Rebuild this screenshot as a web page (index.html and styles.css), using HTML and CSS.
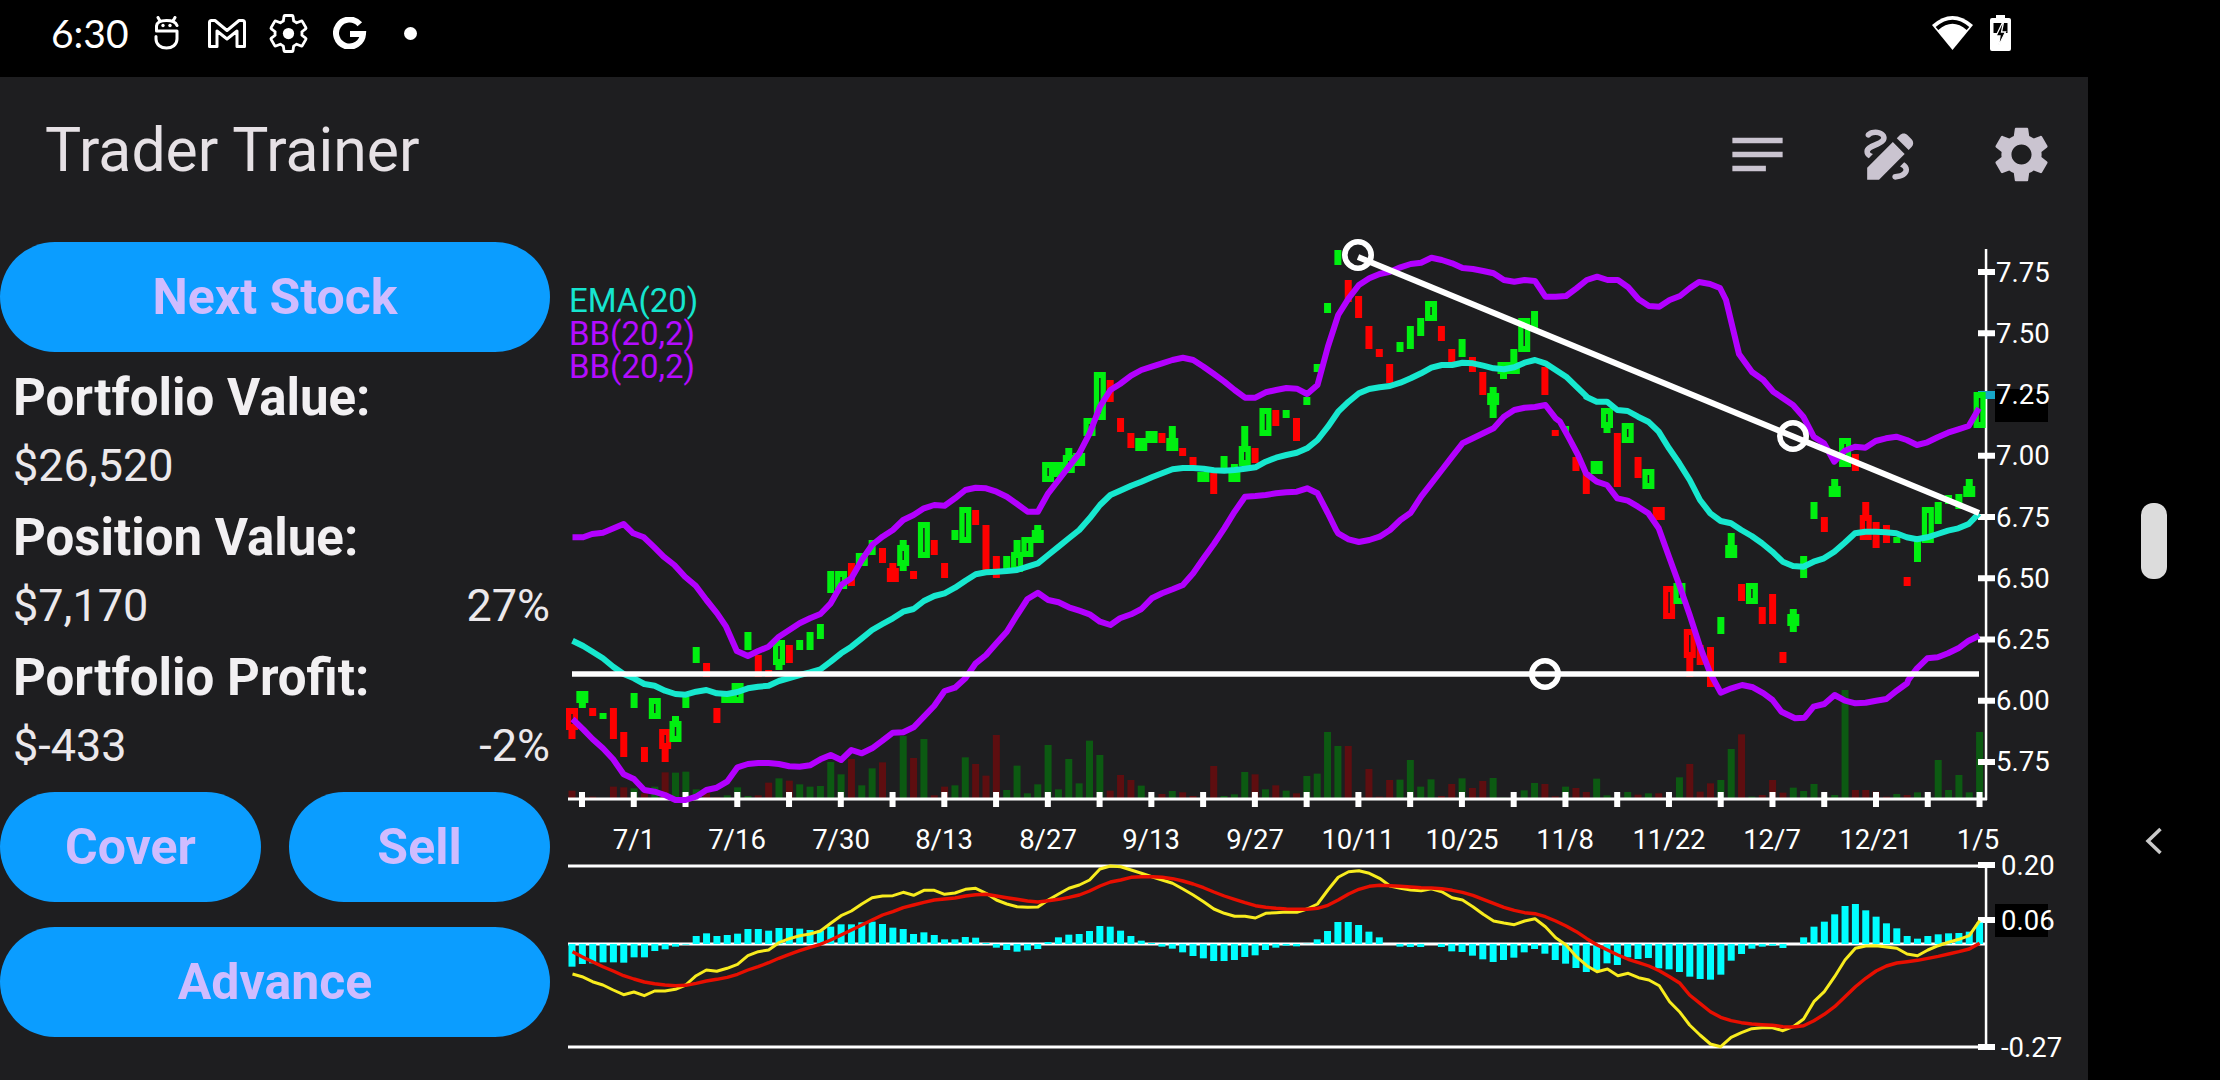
FILE: index.html
```html
<!DOCTYPE html>
<html lang="en">
<head>
<meta charset="utf-8">
<title>Trader Trainer</title>
<link rel="stylesheet" href="styles.css">
</head>
<body>
<header class="status-bar">
  <div class="status-left">
    <span class="clock">6:30</span>
    <svg class="si si-bot" viewBox="0 0 25 34"><path class="si-line" d="M23 9.500C21.500 5.500 17 4.500 12.500 4.500S3 5.500 2.500 10V15H23V23C23 29 18 32 12.500 32S2 29 2 23V20.500M4 1.500L6 5M21 1.500L19 5"/><circle class="si-fill" cx="9" cy="9.500" r="1.700"/><circle class="si-fill" cx="16" cy="9.500" r="1.700"/></svg>
    <svg class="si si-mail" viewBox="0 0 38 29"><path class="si-line" d="M3.500 1.500H7L19 11.500L31 1.500H34.500Q36.500 1.500 36.500 3.500V27.500H29V12L19 20L9 12V27.500H1.500V3.500Q1.500 1.500 3.500 1.500Z"/></svg>
    <svg class="si si-gear" viewBox="0 0 24 24"><path class="si-line-thin" d="M19.140 12.940c.04-.3.06-.61.06-.94 0-.32-.02-.64-.07-.94l2.030-1.580c.18-.14.23-.41.12-.61l-1.920-3.320c-.12-.22-.37-.29-.59-.22l-2.390.96c-.5-.38-1.030-.7-1.620-.94l-.36-2.540c-.04-.24-.24-.41-.48-.41h-3.840c-.24 0-.43.17-.47.41l-.36 2.540c-.59.24-1.130.57-1.620.94l-2.390-.96c-.22-.08-.47 0-.59.22L2.740 8.870c-.12.21-.08.47.12.61l2.030 1.580c-.05.3-.09.63-.09.94s.02.64.07.94l-2.030 1.580c-.18.14-.23.41-.12.61l1.920 3.320c.12.22.37.29.59.22l2.390-.96c.5.38 1.030.7 1.620.94l.36 2.540c.05.24.24.41.48.41h3.840c.24 0 .44-.17.47-.41l.36-2.540c.59-.24 1.130-.56 1.620-.94l2.390.96c.22.08.47 0 .59-.22l1.920-3.320c.12-.22.07-.47-.12-.61l-2.010-1.580z"/><circle class="si-fill" cx="12" cy="12" r="3"/></svg>
    <svg class="si si-g" viewBox="0 0 34 32"><path class="si-g-line" d="M26.800 7.300A13.500 13.500 0 1 0 30 17H17"/></svg>
    <span class="status-dot"></span>
  </div>
  <div class="status-right">
    <svg class="si si-wifi" viewBox="0 0 41 34"><path class="si-fill" d="M0 9Q20.500 -9 41 9L20.500 34Z"/><path class="si-gap" d="M5 12.500Q20.500 -1 36 12.500"/></svg>
    <svg class="si si-batt" viewBox="0 0 21 36"><path class="si-fill" d="M6 0H15V3H19Q21 3 21 5V34Q21 36 19 36H2Q0 36 0 34V5Q0 3 2 3H6Z"/><path class="si-cut" d="M3.500 8H17.500V18H3.500Z"/><path class="si-bolt" d="M12.500 7.500L6 21H10L8.500 31L15.500 17H11.500L13.500 7.500Z"/></svg>
  </div>
</header>
<div class="screen">
  <main class="app">
    <div class="toolbar">
      <h1 class="title">Trader Trainer</h1>
      <div class="actions">
        <svg class="action" viewBox="0 0 24 24"><path d="M3 18h12v-2H3v2zM3 6v2h18V6H3zm0 7h18v-2H3v2z"/></svg>
        <svg class="action" viewBox="0 0 24 24"><path d="M18.850 10.390l1.060-1.060c.78-.78.78-2.050 0-2.830L18.500 5.090c-.78-.78-2.050-.78-2.830 0l-1.060 1.060 4.240 4.240zm-5.660-2.830L4 16.760V21h4.240l9.190-9.190-4.240-4.250zM19 17.500c0 2.190-2.540 3.500-5 3.500-.55 0-1-.45-1-1s.45-1 1-1c1.540 0 3-.73 3-1.500 0-.47-.48-.87-1.230-1.200l1.480-1.480c1.070.63 1.750 1.470 1.750 2.680zM4.580 13.350C3.610 12.790 3 12.060 3 11c0-1.800 1.890-2.630 3.560-3.360C7.590 7.180 9 6.560 9 6c0-.41-.78-1-2-1-1.260 0-1.800.61-1.830.64-.35.41-.98.46-1.400.12-.41-.34-.49-.95-.15-1.380C3.730 4.240 4.760 3 7 3s4 1.320 4 3c0 1.870-1.930 2.720-3.640 3.470C6.420 9.880 5 10.500 5 11c0 .31.43.6 1.070.86l-1.490 1.490z"/></svg>
        <svg class="action" viewBox="0 0 24 24"><path d="M19.140 12.940c.04-.3.06-.61.06-.94 0-.32-.02-.64-.07-.94l2.030-1.580c.18-.14.23-.41.12-.61l-1.920-3.320c-.12-.22-.37-.29-.59-.22l-2.390.96c-.5-.38-1.030-.7-1.620-.94l-.36-2.540c-.04-.24-.24-.41-.48-.41h-3.840c-.24 0-.43.17-.47.41l-.36 2.540c-.59.24-1.130.57-1.620.94l-2.390-.96c-.22-.08-.47 0-.59.22L2.740 8.870c-.12.21-.08.47.12.61l2.030 1.580c-.05.3-.09.63-.09.94s.02.64.07.94l-2.030 1.580c-.18.14-.23.41-.12.61l1.920 3.320c.12.22.37.29.59.22l2.390-.96c.5.38 1.030.7 1.620.94l.36 2.540c.05.24.24.41.48.41h3.840c.24 0 .44-.17.47-.41l.36-2.540c.59-.24 1.130-.56 1.620-.94l2.390.96c.22.08.47 0 .59-.22l1.920-3.320c.12-.22.07-.47-.12-.61l-2.010-1.580zM12 15.600c-1.980 0-3.600-1.620-3.600-3.600s1.620-3.600 3.600-3.600 3.600 1.620 3.600 3.600-1.620 3.600-3.600 3.600z"/></svg>
      </div>
    </div>
    <div class="content">
      <aside class="panel">
        <button class="pill">Next Stock</button>
        <div class="stats">
          <div class="stat">
            <div class="stat-label">Portfolio Value:</div>
            <div class="stat-value"><span>$26,520</span></div>
          </div>
          <div class="stat">
            <div class="stat-label">Position Value:</div>
            <div class="stat-value"><span>$7,170</span><span>27%</span></div>
          </div>
          <div class="stat">
            <div class="stat-label">Portfolio Profit:</div>
            <div class="stat-value"><span>$-433</span><span>-2%</span></div>
          </div>
        </div>
        <div class="pill-row">
          <button class="pill">Cover</button>
          <button class="pill">Sell</button>
        </div>
        <button class="pill">Advance</button>
      </aside>
      <svg id="chart" class="chart" viewBox="550 231 1538 849">
        <g id="volume"></g>
        <g id="axes"></g>
        <g id="candles"></g>
        <g id="overlays"></g>
        <rect class="price-box" x="1995" y="389" width="53" height="33"/>
        <rect class="price-box" x="1995" y="904" width="53" height="33"/>
        <g class="legend">
          <text class="legend-ema" x="569" y="312">EMA(20)</text>
          <text class="legend-bb" x="569" y="345">BB(20,2)</text>
          <text class="legend-bb" x="569" y="378">BB(20,2)</text>
        </g>
        <g class="axis-labels">
          <text x="1996" y="282">7.75</text>
          <text x="1996" y="343">7.50</text>
          <text x="1996" y="404">7.25</text>
          <text x="1996" y="465">7.00</text>
          <text x="1996" y="527">6.75</text>
          <text x="1996" y="588">6.50</text>
          <text x="1996" y="649">6.25</text>
          <text x="1996" y="710">6.00</text>
          <text x="1996" y="771">5.75</text>
          <text x="2001" y="875">0.20</text>
          <text x="2001" y="930">0.06</text>
          <text x="2001" y="1057">-0.27</text>
        </g>
        <g class="date-labels">
          <text x="634" y="849">7/1</text>
          <text x="737" y="849">7/16</text>
          <text x="841" y="849">7/30</text>
          <text x="944" y="849">8/13</text>
          <text x="1048" y="849">8/27</text>
          <text x="1151" y="849">9/13</text>
          <text x="1255" y="849">9/27</text>
          <text x="1358" y="849">10/11</text>
          <text x="1462" y="849">10/25</text>
          <text x="1565" y="849">11/8</text>
          <text x="1669" y="849">11/22</text>
          <text x="1772" y="849">12/7</text>
          <text x="1876" y="849">12/21</text>
          <text x="1978" y="849">1/5</text>
        </g>
      </svg>
    </div>
  </main>
  <nav class="nav-rail">
    <span class="nav-pill"></span>
    <svg class="nav-back" viewBox="0 0 18 28"><path d="M15.500 2L3 14L15.500 26"/></svg>
  </nav>
</div>
<script src="chart.js"></script>
</body>
</html>
```

FILE: styles.css
```css
* { box-sizing: border-box; }
html, body { margin: 0; padding: 0; }
body {
  width: 2220px;
  height: 1080px;
  overflow: hidden;
  background: #000;
  color: #e6e1e5;
  font-family: Roboto, "Liberation Sans", sans-serif;
  display: flex;
  flex-direction: column;
}

/* status bar */
.status-bar {
  height: 77px;
  flex: none;
  display: flex;
  align-items: center;
  justify-content: space-between;
  padding: 0 209px 11px 51px;
}
.status-left, .status-right { display: flex; align-items: center; }
.clock {
  font-family: Lato, Roboto, sans-serif;
  font-size: 39px;
  color: #fff;
  width: 103px;
  line-height: 1;
}
.si { display: block; flex: none; }
.si-line { fill: none; stroke: #fff; stroke-width: 3; stroke-linejoin: round; stroke-linecap: round; }
.si-line-thin { fill: none; stroke: #fff; stroke-width: 1.500; stroke-linejoin: round; }
.si-fill { fill: #fff; }
.si-gap { fill: none; stroke: #000; stroke-width: 4; }
.si-cut { fill: #000; }
.si-bolt { fill: #000; stroke: #fff; stroke-width: 1.300; }
.si-g-line { fill: none; stroke: #fff; stroke-width: 6; }
.si-bot { width: 25px; height: 34px; margin-right: 29px; }
.si-mail { width: 38px; height: 29px; margin-right: 20px; }
.si-gear { width: 45px; height: 45px; margin-right: 22px; }
.si-g { width: 34px; height: 32px; margin-right: 37px; }
.status-dot { width: 13px; height: 13px; border-radius: 50%; background: #fff; }
.si-wifi { width: 41px; height: 34px; margin-right: 17px; }
.si-batt { width: 21px; height: 36px; }

/* screen */
.screen { flex: 1; display: flex; min-height: 0; }
.app {
  width: 2088px;
  flex: none;
  background: #1e1e20;
  display: flex;
  flex-direction: column;
}
.nav-rail {
  flex: 1;
  background: #000;
  display: flex;
  flex-direction: column;
  align-items: center;
  padding-top: 426px;
}
.nav-pill {
  width: 26px;
  height: 76px;
  border-radius: 12px;
  background: #dcdcdc;
}
.nav-back {
  width: 18px;
  height: 28px;
  margin-top: 248px;
  fill: none;
  stroke: #c9c9c9;
  stroke-width: 3.500;
}

/* toolbar */
.toolbar {
  height: 154px;
  flex: none;
  display: flex;
  align-items: center;
  justify-content: space-between;
  padding: 0 33px 0 45px;
}
.title {
  margin: 0;
  font-size: 60.700px;
  font-weight: 400;
  line-height: 1;
  color: #e6e1e5;
  margin-top: -6px;
}
.actions { display: flex; gap: 65px; }
.action { width: 67px; height: 67px; display: block; fill: #cac4d0; }

/* left panel */
.content { flex: 1; display: flex; min-height: 0; }
.panel {
  width: 550px;
  flex: none;
  padding-top: 11px;
  display: flex;
  flex-direction: column;
}
.pill {
  display: block;
  width: 100%;
  height: 110px;
  flex: none;
  border: 0;
  padding: 0;
  border-radius: 55px;
  background: #0b9dff;
  color: #cfbcff;
  font-family: Roboto, "Liberation Sans", sans-serif;
  font-size: 50px;
  font-weight: 700;
}
.stats { margin: 12px 0; display: flex; flex-direction: column; gap: 4px; }
.stat-label {
  height: 68px;
  line-height: 68px;
  padding-left: 13px;
  font-size: 51px;
  font-weight: 700;
  color: #f2f0f2;
}
.stat-value {
  height: 68px;
  line-height: 68px;
  padding-left: 13px;
  font-size: 45px;
  display: flex;
  justify-content: space-between;
  color: #ece9ec;
}
.pill-row { display: flex; justify-content: space-between; margin-bottom: 25px; }
.pill-row .pill { width: 261px; }

/* chart */
.chart { flex: 1; display: block; min-width: 0; height: 849px; }
.legend text { font-size: 33px; }
.legend-ema { fill: #16e5cf; }
.legend-bb { fill: #b30cff; }
.axis-labels text, .date-labels text { font-size: 27.500px; fill: #fff; }
.date-labels text { text-anchor: middle; }
.price-box { fill: #000; }
```

FILE: chart.js
```js
// Data-driven price, volume and MACD chart. Page coordinates are used directly (see the svg viewBox).
const NS = 'http://www.w3.org/2000/svg';
const X0 = 572, STEP = 10.35;
const xAt = i => X0 + STEP * i;

const GREEN = '#00f010', RED = '#ff0000';
const VOL_G = '#0c5a12', VOL_R = '#5e0e10';
const PURPLE = '#b300ff', TEAL = '#17e8cf';

function el(parent, tag, attrs) {
  const node = document.createElementNS(NS, tag);
  for (const k in attrs) node.setAttribute(k, attrs[k]);
  parent.appendChild(node);
  return node;
}
const rect = (p, x, y, w, h, fill) => el(p, 'rect', { x, y, width: w, height: h, fill });
const line = (p, d, stroke, width) => el(p, 'path', { d, stroke, 'stroke-width': width, fill: 'none', 'stroke-linejoin': 'round', 'stroke-linecap': 'butt' });

// traced points: [originX, originY, scaleX, scaleY, flat x,y list]
function tr(ox, oy, sx, sy, flat) {
  const out = [];
  for (let i = 0; i < flat.length; i += 2) out.push([ox + flat[i] / sx, oy + flat[i + 1] / sy]);
  return out;
}
const Z3 = f => tr(560, 230, 2.8, 3, f), Z4 = f => tr(1120, 230, 2.8, 3, f), Z5 = f => tr(1560, 380, 3, 3, f);
const Z6 = f => tr(560, 520, 2.8, 3, f), Z7 = f => tr(1120, 520, 2.8, 3, f), Z8 = f => tr(560, 820, 2.8, 3, f);
const Z9 = f => tr(1120, 820, 2.8, 3, f), Z10 = f => tr(1660, 680, 2.8, 3, f);
const toD = pts => 'M' + pts.map(p => p[0].toFixed(1) + ' ' + p[1].toFixed(1)).join('L');

// ----- volume: top of bar, sign = direction -----
const volA = [
  -812, -830, -830, 835, -800, -802, 805, -820, 800, -757,
  758, 755, 808, -820, -832, 826, 802, 828, -826, -788,
  775, -782, 793, 800, 798, 726, 763, -717, 796, 745,
  -727, -832, 648, -714, 657, -826, -800, 796, 712, -732,
  -767, -645, 810, 737, 820, 793, 675, 808, 717, 790,
  662, 705, -812, -765, -780, 797, 830, -822, 813, -817,
  -828, -832, -738, 828, 823, 756, -763, 808, -796, 812,
  -820, 768, 761, 636, 678, -678, -830, -747, -830, -780,
  779, 720, 800, 778, -828, -792, 775, -804, -783, 774,
  833, 833, 811, 789, -792, -829, 800, -804, -816, 776,
  826, 833, 816, -824, 820, -820, -830, 772
];
const volB = [
  -252, -335, -310, 300, 207, -163, 350, -345, -300, -338,
  323, 333, 312, 350, 345, 30, -330, -330, -335, -350,
  342, -345, 337, 350, 240, 330, 285, 337, 156
];
const gVol = document.getElementById('volume');
volA.forEach((z, i) => {
  const y = 520 + Math.abs(z) / 3;
  rect(gVol, xAt(i) - 3.5, y, 7, 799 - y, z > 0 ? VOL_G : VOL_R);
});
volB.forEach((z, k) => {
  const y = 680 + Math.abs(z) / 3;
  rect(gVol, xAt(108 + k) - 3.5, y, 7, 799 - y, z > 0 ? VOL_G : VOL_R);
});

// ----- axes -----
const gAx = document.getElementById('axes');
const WHITE = '#fff';
rect(gAx, 568, 797.5, 1419, 3, WHITE);
rect(gAx, 1984.8, 249, 2.5, 551, WHITE);
for (let k = 0; k < 28; k++) rect(gAx, 582 + 51.76 * k - 3, 792, 6, 15, WHITE);
for (let k = 0; k < 9; k++) rect(gAx, 1978, 272 + 61.25 * k - 3, 17, 6, WHITE);
rect(gAx, 1978, 391, 17, 8, '#17a6c6');
rect(gAx, 568, 864.5, 1419, 3, WHITE);
rect(gAx, 568, 1045.5, 1419, 3, WHITE);
rect(gAx, 568, 942.5, 1419, 3, WHITE);
rect(gAx, 1984.8, 865, 2.5, 182, WHITE);
[865, 920, 1047].forEach(y => rect(gAx, 1978, y - 3, 17, 6, WHITE));

// ----- candles: [green?, bodyTop, bodyBottom, wide?, wickTop, wickBottom] -----
const C = [
  [0, 708, 730, 1, 0, 739], [1, 691, 703, 1, 0, 708], [0, 708, 716, 0], [1, 713, 719, 0], [0, 708, 739, 0],
  [0, 752, 757, 0, 732, 0], [1, 693, 708, 0], [0, 747, 754, 0, 0, 762], [1, 698, 719, 1], [0, 729, 749, 1, 0, 762],
  [1, 721, 742, 1, 716, 0], [1, 697, 708, 0], [1, 655, 663, 0, 647, 0], [0, 663, 677, 0], [0, 708, 723, 0],
  [1, 692, 703, 1], [1, 683, 703, 1], [1, 640, 650, 0, 632, 0], [0, 663, 677, 0, 655, 0], [0, 670, 677, 0],
  [1, 640, 665, 1, 0, 670], [0, 645, 663, 0], [1, 640, 650, 0], [1, 632, 650, 0], [1, 624, 639, 0],
  [1, 571, 593, 0], [1, 571, 589, 1], [0, 563, 586, 0], [1, 553, 566, 1], [1, 540, 555, 0],
  [0, 548, 563, 0], [0, 568, 582, 1, 563, 0], [1, 545, 566, 1, 540, 571], [0, 571, 579, 0], [1, 522, 558, 1],
  [0, 540, 555, 0], [0, 563, 572, 0, 0, 578], [1, 530, 540, 0], [1, 507, 543, 1], [0, 510, 525, 0],
  [0, 525, 570, 0], [0, 556, 578, 0], [1, 556, 572, 0], [1, 552, 572, 1, 540, 0], [1, 537, 557, 1],
  [1, 530, 543, 1, 525, 0], [1, 462, 482, 1], [1, 462, 477, 1], [1, 455, 473, 1, 448, 0], [1, 453, 466, 1],
  [1, 418, 436, 1], [1, 372, 420, 1], [0, 380, 402, 0], [0, 418, 432, 0], [0, 433, 448, 0],
  [1, 438, 451, 1], [1, 431, 443, 1], [0, 433, 443, 0], [1, 438, 451, 1, 426, 0], [0, 448, 456, 0],
  [0, 457, 466, 0], [1, 472, 482, 1], [0, 473, 487, 0, 0, 494], [1, 456, 468, 0], [1, 472, 482, 1, 464, 0],
  [1, 446, 466, 1, 426, 0], [0, 448, 463, 0], [1, 408, 436, 1], [0, 410, 426, 0], [1, 410, 418, 0],
  [0, 418, 441, 0], [1, 397, 405, 0], [1, 364, 372, 0], [1, 303, 313, 0], [1, 250, 265, 0],
  [0, 280, 302, 0], [0, 296, 318, 0], [0, 326, 349, 0], [0, 349, 357, 0], [0, 364, 383, 0],
  [1, 342, 352, 0], [1, 326, 349, 0], [1, 318, 336, 0], [1, 301, 321, 1], [0, 326, 341, 0],
  [0, 349, 362, 0], [1, 339, 357, 0], [0, 357, 372, 0], [0, 372, 395, 0], [1, 393, 405, 1, 387, 418],
  [1, 362, 374, 1, 0, 379], [1, 362, 374, 1, 349, 0], [1, 318, 352, 1], [1, 311, 330, 0], [0, 381, 395, 0, 367, 0],
  [0, 430, 436, 0], [1, 426, 432, 0], [0, 457, 471, 0], [0, 472, 494, 0], [1, 461, 474, 1],
  [1, 408, 428, 1, 0, 433], [0, 433, 487, 0], [1, 423, 443, 1], [0, 457, 478, 0], [1, 469, 489, 1],
  [0, 507, 520, 1], [0, 586, 619, 1], [1, 583, 604, 1], [0, 629, 658, 1, 0, 677], [0, 645, 665, 0],
  [0, 647, 687, 0], [1, 617, 634, 0], [1, 545, 558, 1, 533, 0], [0, 584, 601, 0], [1, 583, 604, 1],
  [0, 607, 624, 0], [0, 594, 624, 0], [0, 652, 663, 0], [1, 614, 626, 1, 609, 632], [1, 556, 578, 0],
  [1, 502, 519, 0], [0, 517, 532, 0], [1, 486, 497, 1, 479, 0], [1, 438, 467, 1], [0, 454, 471, 0],
  [0, 515, 540, 1, 502, 0], [0, 522, 548, 0], [0, 525, 543, 0], [1, 537, 543, 0], [0, 577, 586, 0],
  [1, 537, 562, 0], [1, 507, 543, 1], [1, 502, 524, 0], [1, 495, 504, 0], [1, 494, 509, 0],
  [1, 486, 497, 1, 479, 0], [1, 392, 428, 1]
];
const gC = document.getElementById('candles');
C.forEach((c, i) => {
  const [up, top, bot, wide, wt, wb] = c;
  const x = xAt(i), col = up ? GREEN : RED;
  if (wt) rect(gC, x - 3.5, wt, 7, top - wt, col);
  if (wb) rect(gC, x - 3.5, bot, 7, wb - bot, col);
  const w = wide ? 12 : 7;
  rect(gC, x - w / 2, top, w, bot - top, col);
  if (wide && bot - top >= 18) rect(gC, x - 0.75, top + 6, 1.5, bot - top - 12, '#1e1e20');
});

// ----- moving average and Bollinger lines -----
const upper = [].concat(
  Z6([35,52,65,52,90,42,120,38,150,25,178,12,205,40,235,52,262,80,290,110,320,135,350,170,380,197,410,240,440,280,465,320,495,393,526,408,555,393,584,380,613,350,642,330,671,310,700,295,729,282,758,250,787,195,816,175,845,120,874,75,903,50,932,30]),
  Z3([961,870,990,855,1019,835,1048,825,1077,827,1106,805,1135,780,1164,773,1193,775,1222,785,1251,800,1280,822,1309,845,1338,845,1367,790,1396,750,1425,710,1454,670,1483,610,1512,530,1541,480]),
  Z4([0,462,31,437,60,420,89,410,118,400,147,390,176,383,205,390,234,410,263,432,292,455,321,480,350,503,379,503,408,487,437,480,466,474,495,476,524,492,553,465,582,350,611,255,640,205,669,165,698,145,727,132,756,125,785,112,814,102,843,98,872,83,901,90,930,100,959,114,988,117,1017,123,1046,130,1075,150,1104,155,1133,150,1162,153,1191,200,1220,200,1249,198,1278,175,1307,150,1336,140,1365,150,1394,150,1423,172,1452,208,1481,228,1510,230,1539,210,1568,198]),
  [[1690,288],[1699,282],[1710,284],[1720,288],[1726,300],[1739,354],[1752,372]],
  Z5([610,0,640,35,699,75,730,110,761,170,792,190,823,245,854,212,885,200,916,203,947,183,978,175,1009,170,1040,180,1071,195,1102,187,1133,172,1164,158,1195,148,1226,138,1257,85])
);
const lower = [].concat(
  Z6([35,597,65,628,91,657,120,685,149,718,178,763,207,777,236,810,265,815,294,825,323,840,352,840,381,830,410,810,439,803,468,785,497,742,526,732,555,729,584,729,613,732,642,739,671,740,700,736,729,718,758,705,787,720,816,690,845,700,874,685,903,662,932,638,961,637,990,622,1019,590,1048,557,1077,513,1106,503,1135,475,1164,430,1193,405,1222,370,1251,335,1280,285,1309,237,1338,218,1367,240,1396,247,1425,262,1454,272,1483,283,1512,305,1541,315]),
  Z7([0,295,31,283,60,267,89,235,118,220,147,208,176,195,205,160,234,115,263,72,292,25]),
  Z4([321,845,350,800,379,798,408,795,437,790,466,787,495,785,524,775,553,790,582,850,605,900]),
  Z7([611,40,640,58,669,66,698,60,727,50,756,30]),
  Z4([785,870,814,848,843,800,872,760,901,720,930,680,959,640,988,625,1017,610,1046,595,1075,560,1104,540,1133,533,1162,531,1191,525,1220,565]),
  Z5([0,125,25,170,54,225,78,280,110,305,141,315,172,355,203,362,234,380,265,400,296,445,327,530,358,615,389,705,420,800,451,880]),
  Z10([170,38,200,25,230,15,260,22,290,40,315,60,340,95,378,115,405,113,430,80,460,72,489,45,518,62,547,70,576,68,605,62,634,57,663,32,692,10]),
  Z5([1045,900,1071,865,1102,835,1133,832,1164,820,1195,805,1226,782,1257,767])
);
const ema = [].concat(
  Z6([35,362,65,378,91,395,120,415,149,440,178,462,207,475,236,492,265,497,294,512,323,522,352,524,381,515,410,510,439,520,468,522,497,516,526,505,555,500,584,497,613,483,642,474,671,465,700,457,729,448,758,425,787,400,816,380,845,355,874,330,903,312,932,295,961,275,990,267,1019,243,1048,228,1077,220,1106,203,1135,182,1164,163,1193,157,1222,155,1251,153,1280,150,1309,140,1338,130,1367,105,1396,80,1425,55,1454,30]),
  Z3([1483,865,1512,825,1541,795]),
  Z4([0,782,31,767,60,755,89,742,118,730,147,718,176,714,205,714,234,716,263,721,292,722,321,720,350,716,379,712,408,695,437,683,466,675,495,668,524,655,553,630,582,590,611,545,640,515,669,490,698,477,727,472,756,468,785,458,814,445,843,430,872,413,901,405,930,405,959,398,988,400,1017,407,1046,415,1075,418,1104,412,1133,398,1162,390,1191,400,1220,420,1249,440,1278,470,1307,500]),
  Z5([78,50,110,65,141,65,172,90,203,93,234,110,265,125,296,155,327,205,358,250,389,300,420,360,451,400,482,423,513,430,544,450,575,468,606,490,637,515,668,545,699,558,730,560,761,545,792,535,823,515,854,488,885,460,916,455,947,455,978,457,1009,460,1040,472,1071,478,1102,472,1133,462,1164,452,1195,445,1226,432,1257,400])
);
const gO = document.getElementById('overlays');
line(gO, toD(upper), PURPLE, 6);
line(gO, toD(lower), PURPLE, 6);
line(gO, toD(ema), TEAL, 6);

// ----- drawn trend lines with handles -----
line(gO, 'M1358 257L1979 513', WHITE, 6);
line(gO, 'M572 674L1979 674', WHITE, 5.5);
[[1358, 255], [1793, 436], [1545, 674]].forEach(p => {
  el(gO, 'circle', { cx: p[0], cy: p[1], r: 13.2, fill: 'none', stroke: WHITE, 'stroke-width': 5.6 });
});

// ----- MACD histogram (bar tip, 372 = zero line) -----
const hist = [
  440, 432, 430, 427, 427, 428, 412, 412, 393, 388,
  380, 374, 348, 340, 348, 345, 341, 327, 327, 332,
  324, 324, 326, 330, 332, 320, 313, 313, 307, 305,
  312, 323, 327, 342, 337, 345, 358, 358, 351, 353,
  369, 383, 390, 395, 391, 387, 366, 352, 344, 342,
  333, 318, 320, 332, 348, 362, 369, 380, 386, 397,
  408, 415, 423, 423, 420, 411, 406, 390, 383, 377,
  379, 371, 358, 333, 306, 306, 315, 335, 352, 372,
  380, 381, 381, 372, 381, 394, 396, 407, 418, 426,
  420, 413, 397, 387, 401, 420, 431, 444, 456, 452,
  430, 435, 412, 417, 414, 445, 448, 456, 470, 477,
  479, 464, 422, 402, 386, 380, 377, 384, 372, 352,
  320, 305, 283, 258, 252, 271, 290, 310, 325, 348,
  356, 348, 343, 340, 339, 335, 308
];
const ZERO = 944;
hist.forEach((z, i) => {
  const y = 820 + z / 3;
  rect(gO, xAt(i) - 3.5, Math.min(y, ZERO), 7, Math.abs(y - ZERO), '#00ffff');
});

const macd = [].concat(
  Z8([35,462,62,470,91,485,120,495,149,510,178,524,207,516,236,527,265,513,294,513,323,508,352,495,381,467,410,450,439,454,468,445,497,433,526,407,555,395,584,390,613,368,642,356,671,347,700,342,729,333,758,310,787,287,816,273,845,252,874,233,903,228,932,227,961,217,990,226,1019,211,1048,211,1077,223,1106,219,1135,208,1164,205,1193,220,1222,240,1251,252,1280,260,1309,262,1338,261,1367,240,1396,222,1425,205,1454,195,1483,180,1512,147,1541,138]),
  Z9([2,140,31,150,60,160,89,170,118,180,147,190,176,207,205,225,234,245,263,267,292,280,321,289,350,289,379,294,408,280,437,278,466,276,495,277,524,267,553,252,582,210,611,172,640,155,669,152,698,160,727,175,756,198,785,205,814,210,843,212,872,206,901,215,930,233,959,240,988,260,1017,283,1046,303,1075,309,1104,314,1133,303,1162,296,1191,320,1220,353,1249,375,1278,410,1307,437,1336,455,1365,447,1394,467,1423,460,1452,473,1481,480,1510,497,1539,545,1568,577]),
  Z10([83,1035,112,1065,141,1092,170,1100,199,1072,228,1058,257,1046,286,1043,315,1043,344,1052,373,1040,402,1017,431,965,460,935,489,890,518,840,547,805,576,798,605,797,634,801,663,805,692,822,721,827,750,810,779,797,808,787,837,778,866,767,895,722])
);
const signal = [].concat(
  Z8([35,395,62,410,91,425,120,440,149,453,178,467,207,477,236,486,265,491,294,495,323,497,352,496,381,490,410,483,439,478,468,472,497,463,526,450,555,440,584,428,613,415,642,403,671,392,700,382,729,373,758,360,787,345,816,330,845,315,874,300,903,285,932,275,961,263,990,255,1019,247,1048,240,1077,237,1106,234,1135,228,1164,224,1193,223,1222,228,1251,233,1280,238,1309,243,1338,246,1367,242,1396,238,1425,232,1454,225,1483,213,1512,198,1541,186]),
  Z9([2,180,31,172,60,170,89,170,118,172,147,176,176,183,205,192,234,203,263,216,292,228,321,238,350,248,379,257,408,262,437,265,466,267,495,268,524,268,553,265,582,256,611,240,640,222,669,208,698,199,727,196,756,197,785,199,814,201,843,203,872,204,901,206,930,211,959,217,988,226,1017,238,1046,250,1075,262,1104,271,1133,278,1162,281,1191,290,1220,303,1249,318,1278,335,1307,356,1336,375,1365,390,1394,405,1423,418,1452,428,1481,438,1510,452,1539,470,1568,490]),
  Z10([83,945,112,970,141,995,170,1012,199,1022,228,1028,257,1032,286,1034,315,1036,344,1040,373,1041,402,1037,431,1022,460,1003,489,980,518,950,547,920,576,895,605,873,634,858,663,849,692,845,721,841,750,835,779,829,808,822,837,815,866,807,895,790])
);
line(gO, toD(macd), '#f8ec1e', 3);
line(gO, toD(signal), '#e80f00', 3.4);
```
